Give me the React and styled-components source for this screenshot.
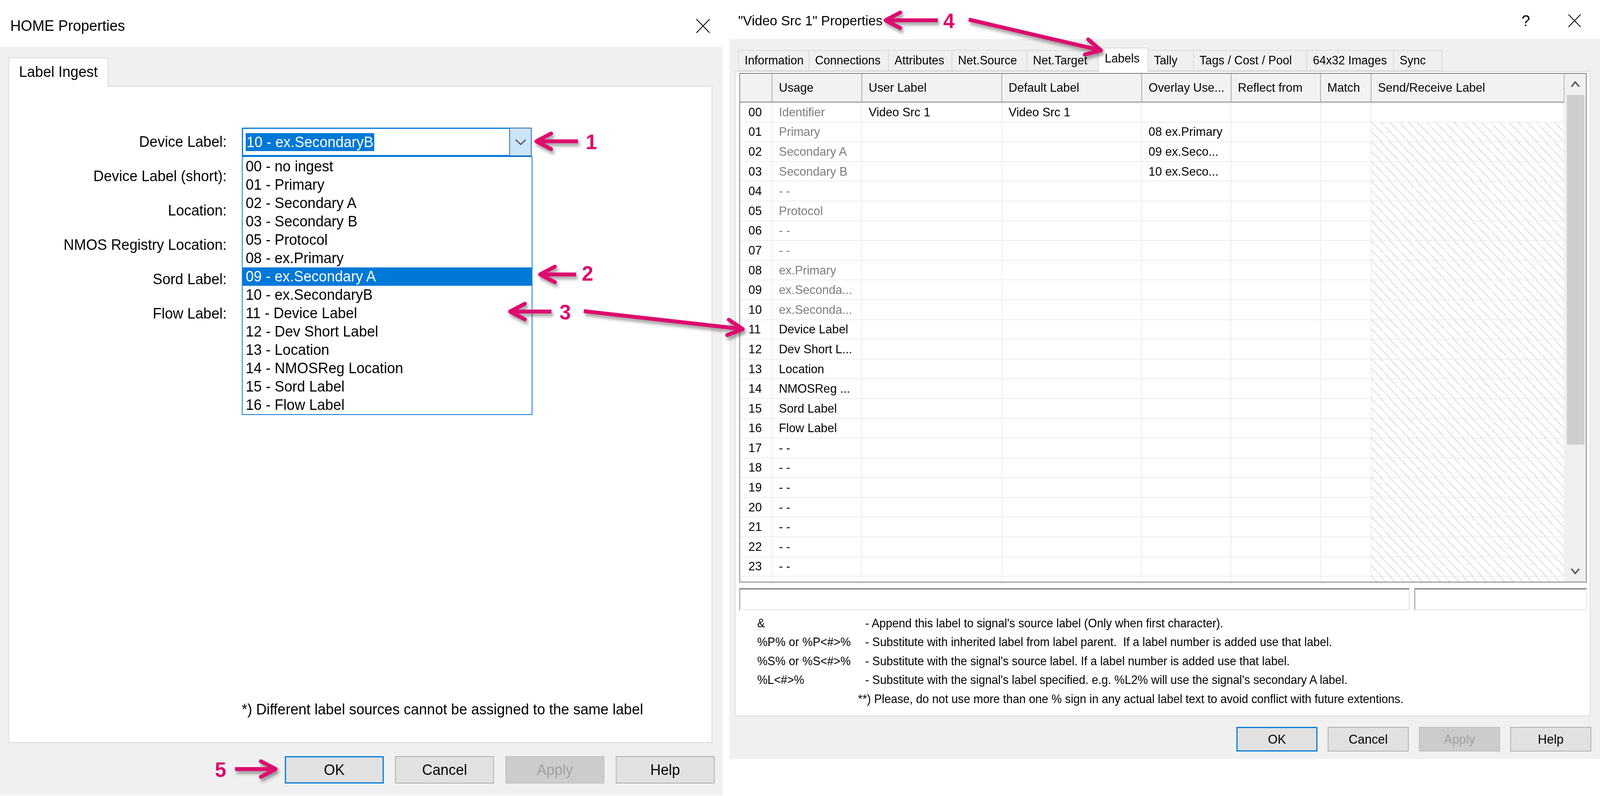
import React from "react";
import styled, { createGlobalStyle } from "styled-components";

const PINK = "#dc0a6e";
const DESIGN_W = 4207;

const GlobalStyle = createGlobalStyle`
  * { box-sizing: border-box; }
  html, body { margin: 0; padding: 0; background: #ffffff; }
  body {
    font-family: "Liberation Sans", Arial, sans-serif;
    color: #000000;
    overflow: hidden;
  }
`;

const Page = styled.div`
  position: relative;
  width: ${DESIGN_W}px;
  height: 2039px;
  display: flex;
  align-items: flex-start;
  background: #ffffff;
  transform-origin: 0 0;
`;

/* ---------- window chrome ---------- */

const Window = styled.div`
  width: ${(p) => p.$w}px;
  height: ${(p) => p.$h}px;
  margin-right: ${(p) => p.$mr || 0}px;
  flex-shrink: 0;
  display: flex;
  flex-direction: column;
  background: #f0f0f0;
`;

const TitleBar = styled.div`
  height: ${(p) => p.$h}px;
  flex-shrink: 0;
  display: flex;
  align-items: center;
  background: #ffffff;
  padding: ${(p) => p.$pt}px ${(p) => p.$pr}px 0 ${(p) => p.$pl}px;
`;

const TitleText = styled.div`
  flex: 1;
  font-size: ${(p) => p.$size}px;
  white-space: nowrap;
`;

const HelpGlyph = styled.span`
  font-size: 40px;
  margin-right: 100px;
  line-height: 1;
`;

const Body = styled.div`
  flex: 1;
  display: flex;
  flex-direction: column;
  padding: ${(p) => p.$pad};
`;

const TabStrip = styled.div`
  height: ${(p) => p.$h}px;
  flex-shrink: 0;
  display: flex;
  align-items: flex-end;
  padding-left: ${(p) => p.$pl || 0}px;
`;

const Tab = styled.div`
  position: relative;
  z-index: ${(p) => (p.$active ? 2 : 1)};
  width: ${(p) => p.$w}px;
  height: ${(p) => p.$h}px;
  margin-left: ${(p) => (p.$first ? 0 : -2)}px;
  margin-bottom: ${(p) => (p.$active ? -2 : 0)}px;
  padding: 0 0 ${(p) => p.$pb || 0}px ${(p) => p.$pl}px;
  display: flex;
  align-items: center;
  background: ${(p) => (p.$active ? "#ffffff" : "#f0f0f0")};
  border: 2px solid #d9d9d9;
  border-bottom: ${(p) => (p.$active ? "none" : "2px solid #d9d9d9")};
  font-size: ${(p) => p.$size}px;
  white-space: nowrap;
`;

const Panel = styled.div`
  flex: 1;
  display: flex;
  flex-direction: column;
  background: #ffffff;
  border: 2px solid #d9d9d9;
  padding: ${(p) => p.$pad};
`;

const ButtonRow = styled.div`
  display: flex;
  justify-content: flex-end;
  gap: ${(p) => p.$gap}px;
  margin: ${(p) => p.$mt}px ${(p) => p.$mr}px 0 0;
  flex-shrink: 0;
`;

const DlgButton = styled.div`
  width: ${(p) => p.$w}px;
  height: ${(p) => p.$h}px;
  display: flex;
  align-items: center;
  justify-content: center;
  font-size: ${(p) => p.$size}px;
  color: ${(p) => (p.$disabled ? "#a0a0a0" : "#000000")};
  background: ${(p) => (p.$disabled ? "#cccccc" : "#e1e1e1")};
  border: ${(p) =>
    p.$primary
      ? "3px solid #0078d7"
      : `2px solid ${p.$disabled ? "#bfbfbf" : "#adadad"}`};
`;

/* ---------- left dialog: label ingest form ---------- */

const Form = styled.div`
  display: grid;
  grid-template-columns: 552px 762px;
  grid-auto-rows: 73px;
  column-gap: 40px;
  row-gap: 15px;
  align-items: center;
  padding-left: 20px;
`;

const FieldLabel = styled.div`
  text-align: right;
  white-space: nowrap;
`;

const Combo = styled.div`
  position: relative;
  height: 73px;
  display: flex;
  align-items: center;
  background: #ffffff;
  border: ${(p) => (p.$focused ? "3px solid #0078d7" : "2px solid #7a7a7a")};
`;

const ComboValue = styled.div`
  flex: 1;
  padding-left: 7px;
  white-space: nowrap;
`;

const Selected = styled.span`
  display: inline-block;
  line-height: 46px;
  padding: 0 2px;
  background: #0078d7;
  color: #ffffff;
`;

const ComboButton = styled.div`
  align-self: stretch;
  width: 59px;
  margin: -3px -3px -3px 0;
  display: flex;
  align-items: center;
  justify-content: center;
  background: #cce4f7;
  border: 2px solid #2b66ab;
`;

const DropList = styled.ul`
  position: absolute;
  z-index: 5;
  top: calc(100% + 3px);
  left: -3px;
  width: 764px;
  margin: 0;
  padding: 1px 0 0;
  list-style: none;
  background: #ffffff;
  border: 2px solid #0078d7;
`;

const DropItem = styled.li`
  height: 47px;
  line-height: 47px;
  padding-left: 8px;
  white-space: nowrap;
  background: ${(p) => (p.$selected ? "#0078d7" : "transparent")};
  color: ${(p) => (p.$selected ? "#ffffff" : "#000000")};
`;

const Footnote = styled.div`
  margin: auto 180px 61px 0;
  line-height: 46px;
  text-align: right;
  white-space: nowrap;
`;

/* ---------- right dialog: labels grid ---------- */

const COLS = "85px 236px 368px 368px 235px 235px 133px 1fr";

const GridFrame = styled.div`
  height: 1305px;
  flex-shrink: 0;
  display: flex;
  background: #ffffff;
  border: 2px solid #7a7a7a;
`;

const Table = styled.div`
  flex: 1;
  display: flex;
  flex-direction: column;
  overflow: hidden;
  font-size: 31.5px;
`;

const HeadRow = styled.div`
  display: grid;
  grid-template-columns: ${COLS};
  height: 74px;
  flex-shrink: 0;
  background: #f2f2f2;
  border-bottom: 3px solid #a0a0a0;
`;

const HeadCell = styled.div`
  display: flex;
  align-items: center;
  padding-left: 17px;
  border-right: 2px solid #a8a8a8;
  white-space: nowrap;
  overflow: hidden;
`;

const Row = styled.div`
  display: grid;
  grid-template-columns: ${COLS};
  height: 50.6px;
  flex-shrink: 0;
  border-bottom: 2px solid #ececec;
`;

const Cell = styled.div`
  display: flex;
  align-items: center;
  padding-left: ${(p) => (p.$num ? 22 : 17)}px;
  border-right: 2px solid #ececec;
  white-space: nowrap;
  overflow: hidden;
  color: ${(p) => (p.$dim ? "#7d7d7d" : "#000000")};
  background: ${(p) =>
    p.$hatch
      ? "repeating-linear-gradient(45deg, #dadada 0 2px, transparent 2px 17px)"
      : "transparent"};
`;

const ScrollBar = styled.div`
  width: 56px;
  flex-shrink: 0;
  display: flex;
  flex-direction: column;
  background: #f0f0f0;
`;

const ScrollBtn = styled.div`
  height: 54px;
  flex-shrink: 0;
  display: flex;
  align-items: center;
  justify-content: center;
`;

const ScrollTrack = styled.div`
  flex: 1;
  padding: 0 4px 0 6px;
`;

const Thumb = styled.div`
  height: 896px;
  background: #cdcdcd;
`;

const EditRow = styled.div`
  height: 56px;
  flex-shrink: 0;
  display: flex;
  gap: 13px;
  margin-top: 15px;
`;

const EditBox = styled.div`
  flex: ${(p) => (p.$w ? `0 0 ${p.$w}px` : "1")};
  background: #ffffff;
  border-style: solid;
  border-width: 3px 2px 2px 2px;
  border-color: #7a7a7a #e3e3e3 #e3e3e3 #8a8a8a;
`;

const Legend = styled.div`
  display: grid;
  grid-template-columns: 284px 1fr;
  grid-auto-rows: 48.5px;
  align-items: center;
  margin-top: 9px;
  padding-left: 47px;
  font-size: 30.5px;
  white-space: pre;
`;

const LegendNote = styled.div`
  grid-column: 1 / -1;
  padding-left: 265px;
`;

/* ---------- callouts ---------- */

const Overlay = styled.svg`
  position: absolute;
  left: 0;
  top: 0;
  z-index: 20;
  pointer-events: none;
`;

const Callout = styled.text`
  font-family: "Liberation Sans Narrow", "Liberation Sans", Arial, sans-serif;
  font-weight: 700;
  font-size: 54px;
  fill: ${PINK};
`;

function CloseIcon({ size = 36 }) {
  return (
    <svg width={size} height={size} viewBox="0 0 36 36">
      <path d="M1 1 L35 35 M35 1 L1 35" stroke="#000" strokeWidth="2.2" fill="none" />
    </svg>
  );
}

function Chevron({ up, w = 24, h = 14, color = "#5a5a5a", sw = 4 }) {
  const d = up
    ? `M2 ${h - 2} L${w / 2} 2 L${w - 2} ${h - 2}`
    : `M2 2 L${w / 2} ${h - 2} L${w - 2} 2`;
  return (
    <svg width={w} height={h} viewBox={`0 0 ${w} ${h}`}>
      <path d={d} stroke={color} strokeWidth={sw} fill="none" />
    </svg>
  );
}

function Arrow({ x1, y1, x2, y2 }) {
  const ang = Math.atan2(y1 - y2, x1 - x2);
  const len = 44;
  const spread = 0.47;
  const ax = x2 + len * Math.cos(ang + spread);
  const ay = y2 + len * Math.sin(ang + spread);
  const bx = x2 + len * Math.cos(ang - spread);
  const by = y2 + len * Math.sin(ang - spread);
  const sx = x2 + 6 * Math.cos(ang);
  const sy = y2 + 6 * Math.sin(ang);
  return (
    <g filter="url(#arrowShadow)">
      <path d={`M${x1} ${y1} L${sx} ${sy}`} stroke={PINK} strokeWidth="10" fill="none" />
      <path
        d={`M${ax} ${ay} L${x2} ${y2} L${bx} ${by}`}
        stroke={PINK}
        strokeWidth="10"
        strokeLinecap="round"
        strokeLinejoin="round"
        fill="none"
      />
    </g>
  );
}

/* ---------- data ---------- */

const ingestOptions = [
  "00 - no ingest",
  "01 - Primary",
  "02 - Secondary A",
  "03 - Secondary B",
  "05 - Protocol",
  "08 - ex.Primary",
  "09 - ex.Secondary A",
  "10 - ex.SecondaryB",
  "11 - Device Label",
  "12 - Dev Short Label",
  "13 - Location",
  "14 - NMOSReg Location",
  "15 - Sord Label",
  "16 - Flow Label",
];

const formFields = [
  "Device Label:",
  "Device Label (short):",
  "Location:",
  "NMOS Registry Location:",
  "Sord Label:",
  "Flow Label:",
];

const rightTabs = [
  ["Information", 187],
  ["Connections", 211],
  ["Attributes", 169],
  ["Net.Source", 199],
  ["Net.Target", 190],
  ["Labels", 132],
  ["Tally", 122],
  ["Tags / Cost / Pool", 300],
  ["64x32 Images", 230],
  ["Sync", 129],
];

const headers = ["", "Usage", "User Label", "Default Label", "Overlay Use...", "Reflect from", "Match", "Send/Receive Label"];

const usages = [
  "Identifier", "Primary", "Secondary A", "Secondary B", "- -", "Protocol", "- -", "- -",
  "ex.Primary", "ex.Seconda...", "ex.Seconda...", "Device Label", "Dev Short L...", "Location",
  "NMOSReg ...", "Sord Label", "Flow Label", "- -", "- -", "- -", "- -", "- -", "- -", "- -",
];

const overlays = { 1: "08 ex.Primary", 2: "09 ex.Seco...", 3: "10 ex.Seco..." };

const legend = [
  ["&", "- Append this label to signal's source label (Only when first character)."],
  ["%P% or %P<#>%", "- Substitute with inherited label from label parent.  If a label number is added use that label."],
  ["%S% or %S<#>%", "- Substitute with the signal's source label. If a label number is added use that label."],
  ["%L<#>%", "- Substitute with the signal's label specified. e.g. %L2% will use the signal's secondary A label."],
];

export default function App() {
  // the window may be narrower than the design width: squeeze horizontally to fit
  const fit =
    typeof window !== "undefined" ? Math.min(1, window.innerWidth / DESIGN_W) : 1;

  return (
    <Page style={{ transform: `scaleX(${fit})` }}>
      <GlobalStyle />

      {/* HOME Properties */}
      <Window $w={1900} $h={2037} $mr={18} style={{ fontSize: 38 }}>
        <TitleBar $h={120} $pt={12} $pr={33} $pl={27}>
          <TitleText $size={38.5}>HOME Properties</TitleText>
          <CloseIcon size={37} />
        </TitleBar>
        <Body $pad="27px 24px 30px 22px">
          <TabStrip $h={73}>
            <Tab $first $active $w={263} $h={75} $pl={26} $pb={2} $size={38}>
              Label Ingest
            </Tab>
          </TabStrip>
          <Panel $pad="105px 0 0 0" style={{ marginRight: 3 }}>
            <Form>
              {formFields.map((label, i) => (
                <React.Fragment key={label}>
                  <FieldLabel>{label}</FieldLabel>
                  {i === 0 ? (
                    <Combo $focused>
                      <ComboValue>
                        <Selected>10 - ex.SecondaryB</Selected>
                      </ComboValue>
                      <ComboButton>
                        <Chevron w={30} h={16} color="#3c3c3c" sw={2.5} />
                      </ComboButton>
                      <DropList>
                        {ingestOptions.map((o) => (
                          <DropItem key={o} $selected={o.startsWith("09")}>
                            {o}
                          </DropItem>
                        ))}
                      </DropList>
                    </Combo>
                  ) : (
                    <Combo />
                  )}
                </React.Fragment>
              ))}
            </Form>
            <Footnote>*) Different label sources cannot be assigned to the same label</Footnote>
          </Panel>
          <ButtonRow $gap={30} $mt={34} $mr={-3}>
            <DlgButton $w={260} $h={70} $size={38} $primary>OK</DlgButton>
            <DlgButton $w={260} $h={70} $size={38}>Cancel</DlgButton>
            <DlgButton $w={260} $h={70} $size={38} $disabled>Apply</DlgButton>
            <DlgButton $w={260} $h={70} $size={38}>Help</DlgButton>
          </ButtonRow>
        </Body>
      </Window>

      {/* "Video Src 1" Properties */}
      <Window $w={2289} $h={1944}>
        <TitleBar $h={100} $pt={6} $pr={50} $pl={23}>
          <TitleText $size={35.5}>"Video Src 1" Properties</TitleText>
          <HelpGlyph>?</HelpGlyph>
          <CloseIcon size={34} />
        </TitleBar>
        <Body $pad="22px 25px 19px 14px">
          <TabStrip $h={60} $pl={9}>
            {rightTabs.map(([name, w], i) => {
              const active = name === "Labels";
              return (
                <Tab
                  key={name}
                  $first={i === 0}
                  $active={active}
                  $w={w}
                  $h={active ? 62 : 54}
                  $pl={active ? 16 : 15}
                  $pb={active ? 8 : 0}
                  $size={31}
                >
                  {name}
                </Tab>
              );
            })}
          </TabStrip>
          <Panel $pad="3px 8px 0 10px">
            <GridFrame>
              <Table>
                <HeadRow>
                  {headers.map((h, i) => (
                    <HeadCell key={i}>{h}</HeadCell>
                  ))}
                </HeadRow>
                {usages.map((u, i) => (
                  <Row key={i}>
                    <Cell $num>{String(i).padStart(2, "0")}</Cell>
                    <Cell $dim={i <= 10}>{u}</Cell>
                    <Cell>{i === 0 ? "Video Src 1" : ""}</Cell>
                    <Cell>{i === 0 ? "Video Src 1" : ""}</Cell>
                    <Cell>{overlays[i] || ""}</Cell>
                    <Cell />
                    <Cell />
                    <Cell $hatch={i > 0} />
                  </Row>
                ))}
                <Row>
                  <Cell $num />
                  <Cell />
                  <Cell />
                  <Cell />
                  <Cell />
                  <Cell />
                  <Cell />
                  <Cell $hatch />
                </Row>
              </Table>
              <ScrollBar>
                <ScrollBtn>
                  <Chevron up w={24} h={16} />
                </ScrollBtn>
                <ScrollTrack>
                  <Thumb />
                </ScrollTrack>
                <ScrollBtn>
                  <Chevron w={24} h={16} />
                </ScrollBtn>
              </ScrollBar>
            </GridFrame>
            <EditRow>
              <EditBox $w={1762} />
              <EditBox />
            </EditRow>
            <Legend>
              {legend.map(([k, v]) => (
                <React.Fragment key={k}>
                  <div>{k}</div>
                  <div>{v}</div>
                </React.Fragment>
              ))}
              <LegendNote>
                **) Please, do not use more than one % sign in any actual label text to avoid conflict with future extentions.
              </LegendNote>
            </Legend>
          </Panel>
          <ButtonRow $gap={27} $mt={27} $mr={-2}>
            <DlgButton $w={213} $h={63} $size={33} $primary>OK</DlgButton>
            <DlgButton $w={213} $h={63} $size={33}>Cancel</DlgButton>
            <DlgButton $w={213} $h={63} $size={33} $disabled>Apply</DlgButton>
            <DlgButton $w={213} $h={63} $size={33}>Help</DlgButton>
          </ButtonRow>
        </Body>
      </Window>

      {/* numbered callouts */}
      <Overlay width="4207" height="2039" viewBox="0 0 4207 2039">
        <defs>
          <filter id="arrowShadow" x="-20%" y="-60%" width="140%" height="220%">
            <feDropShadow dx="4" dy="7" stdDeviation="4" floodColor="#000" floodOpacity="0.4" />
          </filter>
        </defs>
        <Arrow x1={1520} y1={362} x2={1410} y2={362} />
        <Callout x={1540} y={382}>1</Callout>
        <Arrow x1={1515} y1={703} x2={1420} y2={703} />
        <Callout x={1530} y={719}>2</Callout>
        <Arrow x1={1450} y1={798} x2={1341} y2={798} />
        <Callout x={1471} y={818}>3</Callout>
        <Arrow x1={1535} y1={797} x2={1953} y2={843} />
        <Arrow x1={2466} y1={52} x2={2328} y2={52} />
        <Callout x={2480} y={72}>4</Callout>
        <Arrow x1={2547} y1={50} x2={2895} y2={129} />
        <Callout x={565} y={1990}>5</Callout>
        <Arrow x1={618} y1={1970} x2={725} y2={1970} />
      </Overlay>
    </Page>
  );
}
